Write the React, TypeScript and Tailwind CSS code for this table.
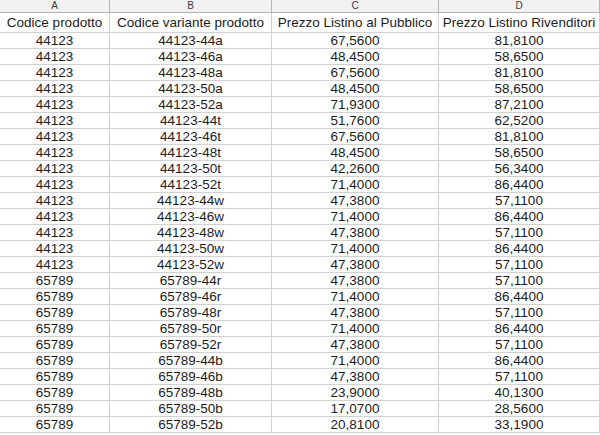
import React from "react";

const rows: [string, string, string, string][] = [
  ["44123", "44123-44a", "67,5600", "81,8100"],
  ["44123", "44123-46a", "48,4500", "58,6500"],
  ["44123", "44123-48a", "67,5600", "81,8100"],
  ["44123", "44123-50a", "48,4500", "58,6500"],
  ["44123", "44123-52a", "71,9300", "87,2100"],
  ["44123", "44123-44t", "51,7600", "62,5200"],
  ["44123", "44123-46t", "67,5600", "81,8100"],
  ["44123", "44123-48t", "48,4500", "58,6500"],
  ["44123", "44123-50t", "42,2600", "56,3400"],
  ["44123", "44123-52t", "71,4000", "86,4400"],
  ["44123", "44123-44w", "47,3800", "57,1100"],
  ["44123", "44123-46w", "71,4000", "86,4400"],
  ["44123", "44123-48w", "47,3800", "57,1100"],
  ["44123", "44123-50w", "71,4000", "86,4400"],
  ["44123", "44123-52w", "47,3800", "57,1100"],
  ["65789", "65789-44r", "47,3800", "57,1100"],
  ["65789", "65789-46r", "71,4000", "86,4400"],
  ["65789", "65789-48r", "47,3800", "57,1100"],
  ["65789", "65789-50r", "71,4000", "86,4400"],
  ["65789", "65789-52r", "47,3800", "57,1100"],
  ["65789", "65789-44b", "71,4000", "86,4400"],
  ["65789", "65789-46b", "47,3800", "57,1100"],
  ["65789", "65789-48b", "23,9000", "40,1300"],
  ["65789", "65789-50b", "17,0700", "28,5600"],
  ["65789", "65789-52b", "20,8100", "33,1900"],
];

const headers = [
  "Codice prodotto",
  "Codice variante prodotto",
  "Prezzo Listino al Pubblico",
  "Prezzo Listino Rivenditori",
];

export default function App() {
  return (
    <div
      className="w-[600px] h-[435px] overflow-hidden bg-white text-[#1c1c1c]"
      style={{ fontFamily: '"Liberation Sans", Arial, sans-serif' }}
    >
      <div className="grid grid-cols-[110px_162px_167px_161px]">
        {["A", "B", "C", "D"].map((l) => (
          <div
            key={l}
            className="h-[13px] flex items-center justify-center border-r border-b border-[#b4b4b4] bg-[#f1f1f1] text-[10px] leading-none text-[#3a3a3a]"
          >
            {l}
          </div>
        ))}
        {headers.map((h) => (
          <div
            key={h}
            className="h-[20px] flex items-center justify-center border-r border-b border-[#d2d2d2] text-[13.5px] leading-none whitespace-nowrap overflow-hidden"
          >
            {h}
          </div>
        ))}
        {rows.map((r, i) =>
          r.map((c, j) => (
            <div
              key={i + "-" + j}
              className="h-[16px] flex items-center justify-center border-r border-b border-[#d2d2d2] text-[13.5px] leading-none whitespace-nowrap"
            >
              {c}
            </div>
          ))
        )}
      </div>
    </div>
  );
}
